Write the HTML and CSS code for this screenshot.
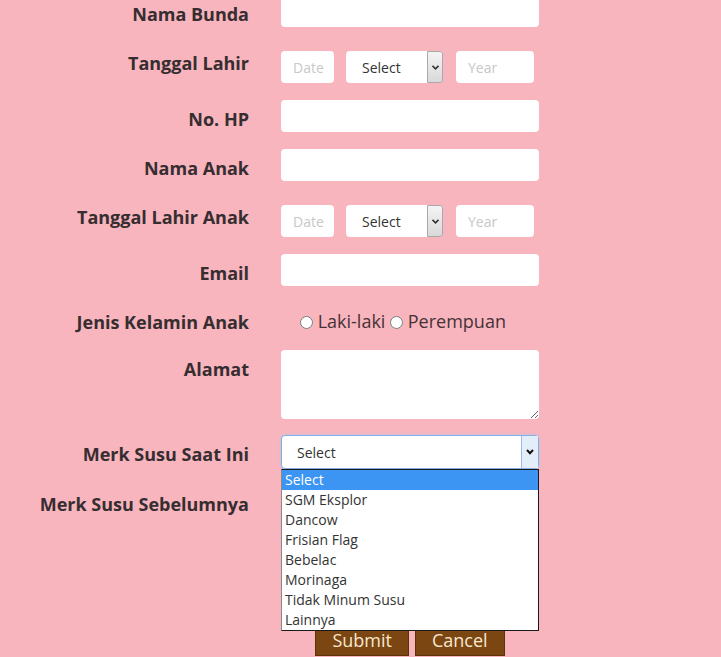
FILE: index.html
```
<!DOCTYPE html>
<html lang="id">
<head>
    <meta charset="UTF-8">
    <meta name="viewport" content="width=device-width, initial-scale=1.0">
    <title>Form Pendaftaran</title>
    <link rel="stylesheet" href="styles.css">
</head>
<body>
    <form class="form" action="#" method="POST">

        <div class="row">
            <label class="label" for="bunda">Nama Bunda</label>
            <div class="field"><input class="text" type="text" id="bunda"></div>
        </div>

        <div class="row row-date">
            <label class="label">Tanggal Lahir</label>
            <div class="field">
                <input class="text date" type="text" placeholder="Date">
                <div class="select month">
                    <select><option>Select</option></select>
                    <span class="arrow"><svg width="7" height="5" viewBox="0 0 7 5"><polyline points="0.5,0.8 3.5,3.8 6.5,0.8" fill="none" stroke="#333" stroke-width="1.6"/></svg></span>
                </div>
                <input class="text year" type="text" placeholder="Year">
            </div>
        </div>

        <div class="row">
            <label class="label" for="hp">No. HP</label>
            <div class="field"><input class="text" type="tel" id="hp"></div>
        </div>

        <div class="row">
            <label class="label" for="anak">Nama Anak</label>
            <div class="field"><input class="text" type="text" id="anak"></div>
        </div>

        <div class="row row-date">
            <label class="label">Tanggal Lahir Anak</label>
            <div class="field">
                <input class="text date" type="text" placeholder="Date">
                <div class="select month">
                    <select><option>Select</option></select>
                    <span class="arrow"><svg width="7" height="5" viewBox="0 0 7 5"><polyline points="0.5,0.8 3.5,3.8 6.5,0.8" fill="none" stroke="#333" stroke-width="1.6"/></svg></span>
                </div>
                <input class="text year" type="text" placeholder="Year">
            </div>
        </div>

        <div class="row">
            <label class="label" for="email">Email</label>
            <div class="field"><input class="text" type="email" id="email"></div>
        </div>

        <div class="row row-radio">
            <label class="label">Jenis Kelamin Anak</label>
            <div class="field radios">
                <label><input type="radio" name="gender"> Laki-laki</label>
                <label><input type="radio" name="gender"> Perempuan</label>
            </div>
        </div>

        <div class="row row-area">
            <label class="label" for="alamat">Alamat</label>
            <div class="field"><textarea id="alamat"></textarea></div>
        </div>

        <div class="row row-open">
            <label class="label">Merk Susu Saat Ini</label>
            <div class="field">
                <div class="select wide open">
                    <select><option>Select</option></select>
                    <span class="arrow"><svg width="8" height="6" viewBox="0 0 8 6"><polyline points="1,1 4,4.2 7,1" fill="none" stroke="#111" stroke-width="2"/></svg></span>
                    <ul class="options">
                        <li class="active">Select</li>
                        <li>SGM Eksplor</li>
                        <li>Dancow</li>
                        <li>Frisian Flag</li>
                        <li>Bebelac</li>
                        <li>Morinaga</li>
                        <li>Tidak Minum Susu</li>
                        <li>Lainnya</li>
                    </ul>
                </div>
            </div>
        </div>

        <div class="row">
            <label class="label">Merk Susu Sebelumnya</label>
            <div class="field">
                <div class="select wide">
                    <select><option>Select</option></select>
                    <span class="arrow"></span>
                </div>
            </div>
        </div>

        <div class="row actions">
            <span></span>
            <div class="buttons">
                <button type="submit" class="btn">Submit</button>
                <button type="reset" class="btn">Cancel</button>
            </div>
        </div>

    </form>
</body>
</html>
```

FILE: styles.css
```
body {
    margin: 0;
    background: #f8b5bd;
    font-family: "Open Sans", Arial, sans-serif;
    color: #333;
    overflow: hidden;
}

.form {
    margin-top: -5px;
}

.row {
    display: grid;
    grid-template-columns: 249px 258px;
    column-gap: 32px;
    margin-bottom: 17px;
}

.label {
    text-align: right;
    font-size: 18px;
    font-weight: bold;
    line-height: 24px;
    padding-top: 7px;
    color: #362d31;
}

.text {
    box-sizing: border-box;
    width: 100%;
    height: 32px;
    border: none;
    border-radius: 4px;
    background: #fff;
    padding: 0 12px;
    font-family: "Open Sans", Arial, sans-serif;
    font-size: 14px;
}
.text::placeholder {
    color: #c8c8c8;
}

.row-date .field {
    display: flex;
    padding-top: 7px;
}
.date {
    width: 53px;
    padding: 0 4px 0 12px;
}
.year {
    width: 78px;
    margin-left: 13px;
}

.select {
    position: relative;
    box-sizing: border-box;
    display: flex;
    height: 32px;
    background: #fff;
    border-radius: 4px;
}
.select select {
    flex: 1;
    min-width: 0;
    appearance: none;
    -webkit-appearance: none;
    border: none;
    background: transparent;
    padding: 0 0 0 16px;
    font-family: "Open Sans", Arial, sans-serif;
    font-size: 14px;
    color: #333;
    outline: none;
}
.select .arrow {
    display: flex;
    align-items: center;
    justify-content: center;
    width: 16px;
    box-sizing: border-box;
    border: 1px solid #a9a9a9;
    border-radius: 0 3px 3px 0;
    background: linear-gradient(#f4f4f4, #d9d9d9);
}
.month {
    width: 97px;
    margin-left: 12px;
}

.wide .arrow {
    border-color: #c6c6c6;
    background: linear-gradient(#f6f6f6, #e2e2e2);
}
.open {
    height: 34px;
    border: 1px solid #86aee3;
    box-shadow: 0 0 3px #a9c8f0;
}
.open select {
    padding-left: 15px;
}
.open .arrow {
    width: 17px;
    border: none;
    border-left: 1px solid #9bbbe4;
    border-radius: 0;
    background: #e4eefa;
}

.options {
    position: absolute;
    top: 33px;
    left: -1px;
    right: -1px;
    z-index: 2;
    margin: 0;
    padding: 0;
    list-style: none;
    background: #fff;
    border: 1px solid #1a1a1a;
    border-left-color: #8a8a8a;
}
.options li {
    height: 20px;
    line-height: 20px;
    padding-left: 3px;
    font-size: 14px;
    color: #333;
}
.options li.active {
    background: #3c94f3;
    color: #fff;
}

.row-radio {
    height: 30px;
}
.radios {
    padding: 7px 0 0 19px;
    font-size: 18px;
    line-height: 23px;
    color: #453238;
}
.radios input {
    width: 13px;
    height: 13px;
    margin: 0;
    vertical-align: -1px;
}

.row-area {
    margin-bottom: 16px;
}
textarea {
    box-sizing: border-box;
    width: 100%;
    height: 69px;
    border: none;
    border-radius: 4px;
    background: #fff;
    display: block;
}

.row-open {
    margin-bottom: 16px;
}

.actions {
    margin-top: 107px;
}
.buttons {
    display: flex;
    justify-content: center;
    gap: 6px;
}
.btn {
    background: #7b4612;
    color: #f7e8cf;
    border: 1px solid #5c3209;
    padding: 3px 16px;
    font-family: "Open Sans", Arial, sans-serif;
    font-size: 18px;
    line-height: 24px;
    cursor: pointer;
}
```
